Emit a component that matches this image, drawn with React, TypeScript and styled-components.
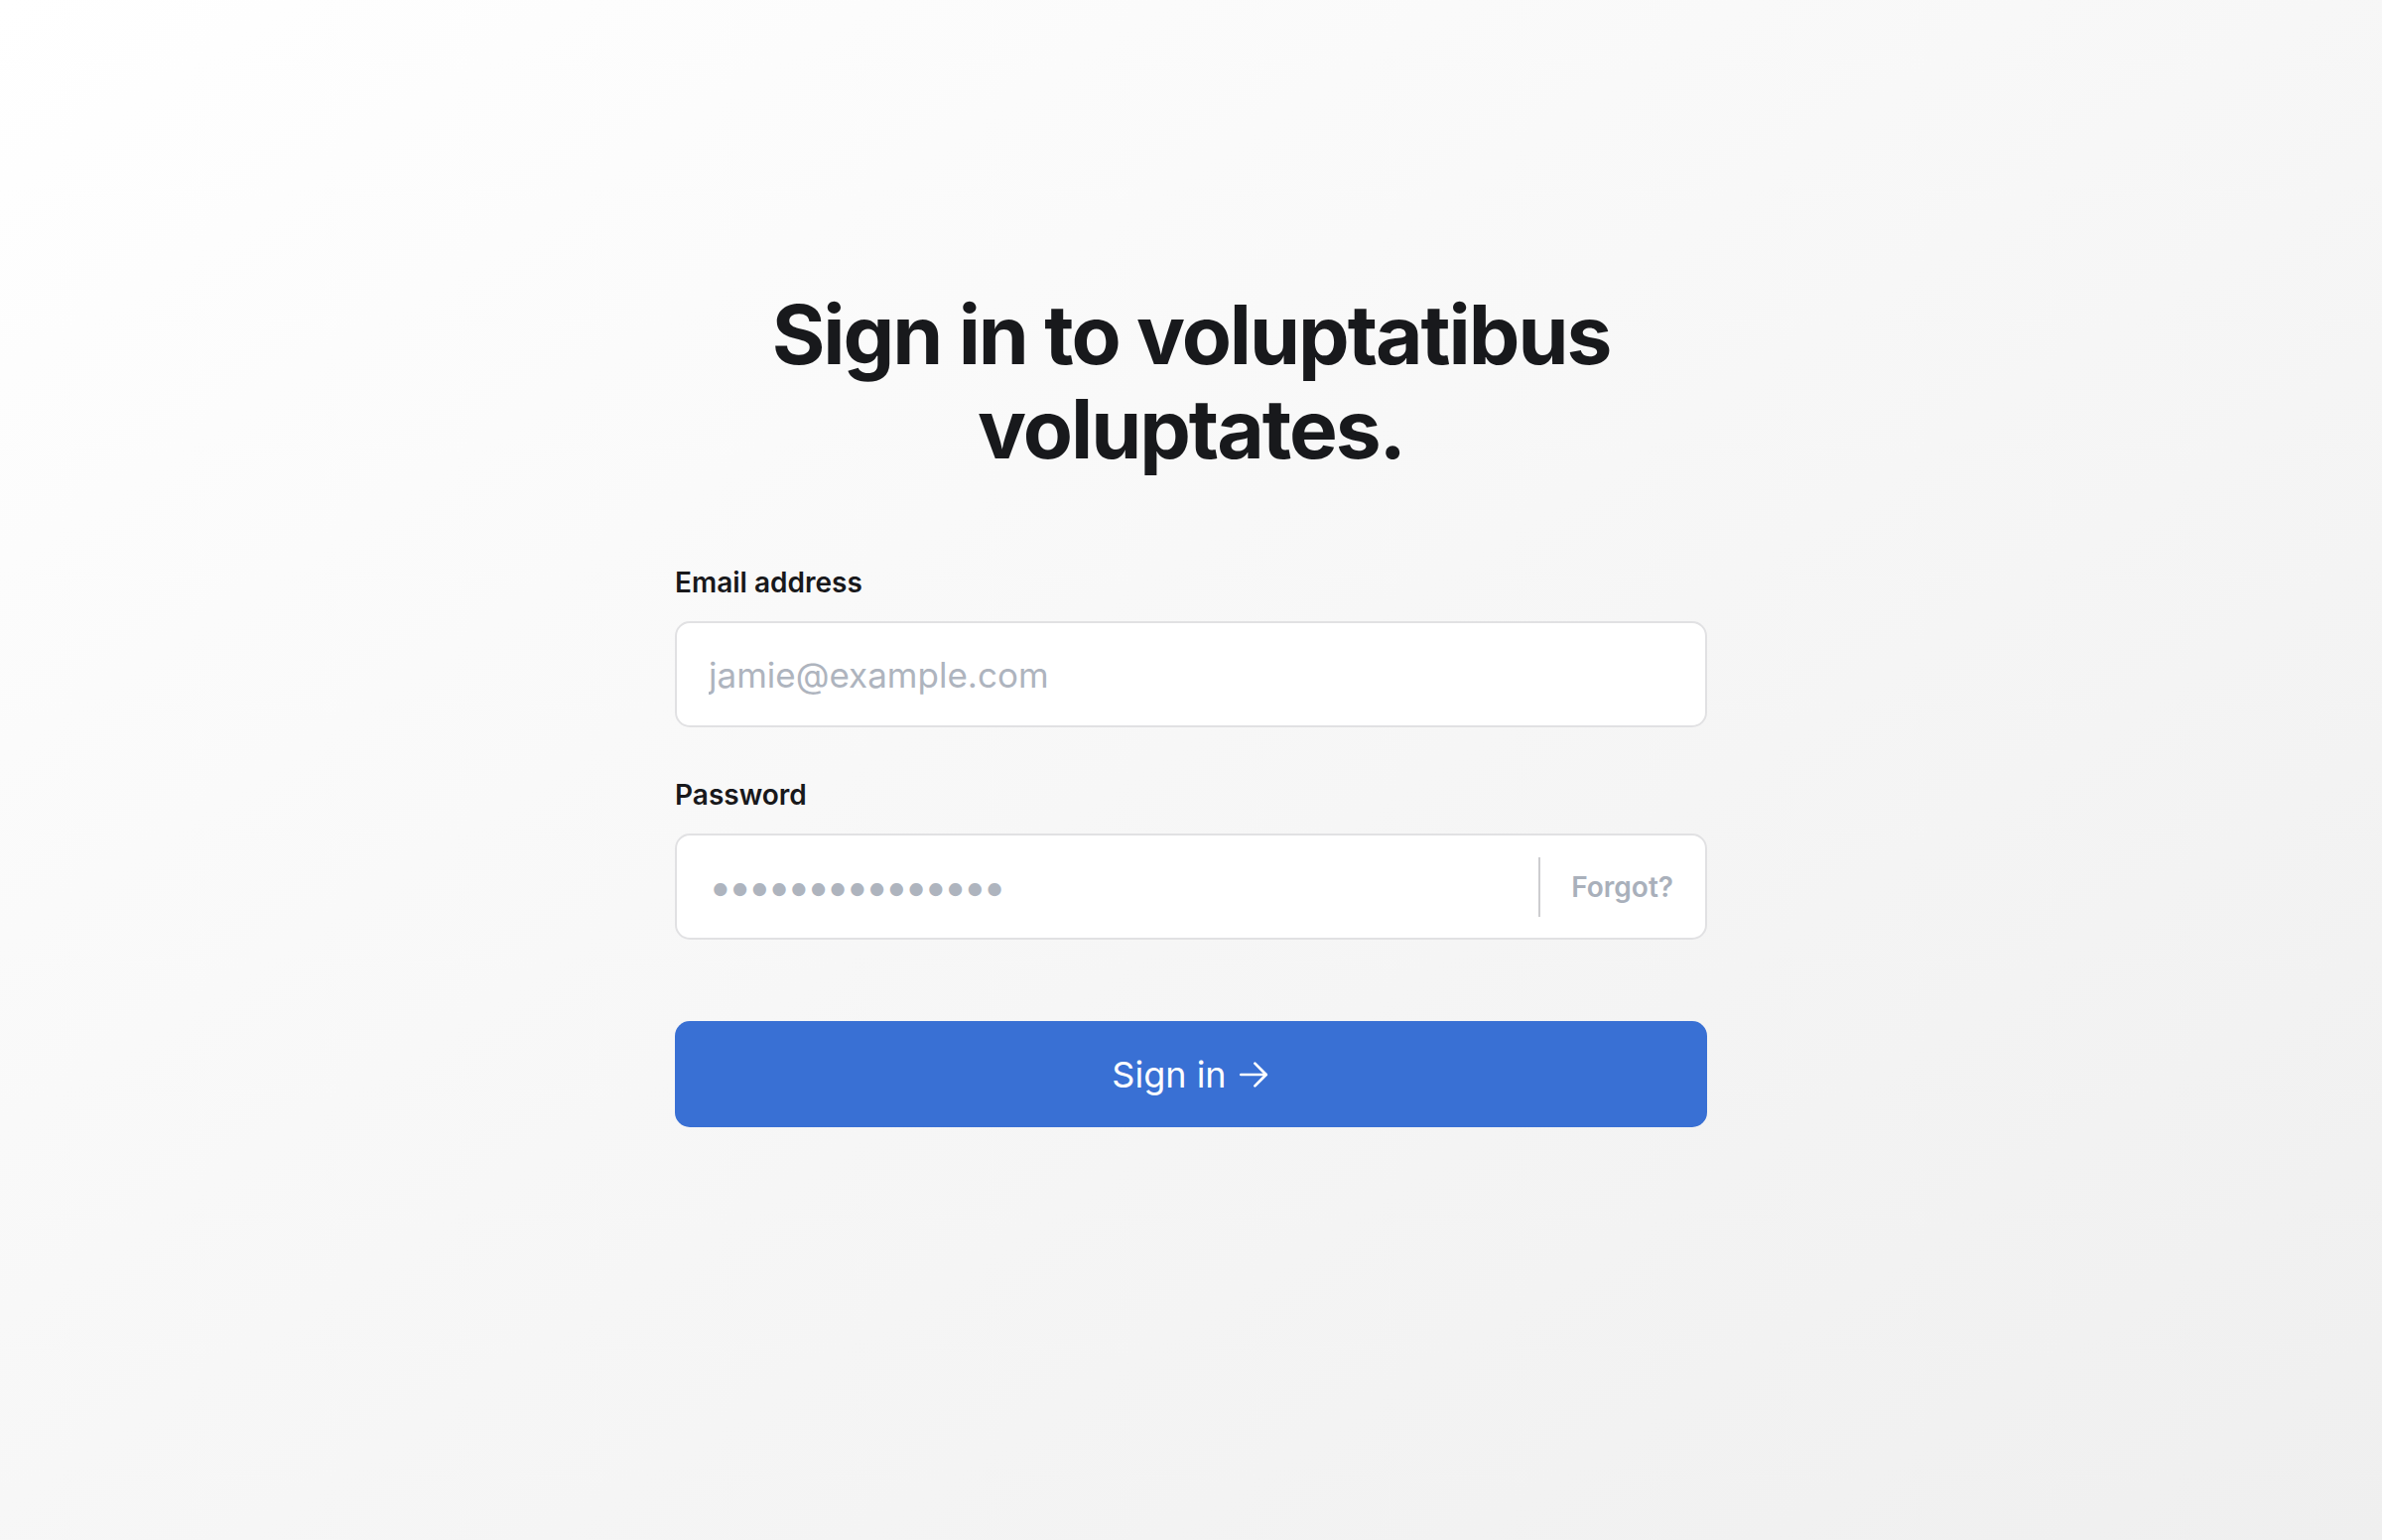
import React from "react";
import styled, { createGlobalStyle } from "styled-components";

const GlobalStyle = createGlobalStyle`
  html, body {
    margin: 0;
    padding: 0;
  }
  body {
    font-family: Inter, "Noto Sans", "Liberation Sans", sans-serif;
    color: #18181b;
    -webkit-font-smoothing: antialiased;
  }
  * { box-sizing: border-box; }
`;

const Page = styled.main`
  min-height: 1552px;
  width: 100%;
  background: linear-gradient(to bottom right, #ffffff 0%, #f6f6f6 55%, #efefef 100%);
  display: flex;
  justify-content: center;
  padding-top: 290px;
`;

const Panel = styled.div`
  width: 1040px;
  display: flex;
  flex-direction: column;
`;

const Title = styled.h1`
  margin: 0 0 88px;
  font-family: Inter, "Liberation Sans", sans-serif;
  font-weight: 700;
  font-size: 82px;
  line-height: 95px;
  letter-spacing: -0.025em;
  text-align: center;
  color: #18191c;
`;

const Form = styled.form`
  display: flex;
  flex-direction: column;
`;

const Field = styled.div<{ $gap?: number }>`
  display: flex;
  flex-direction: column;
  gap: 20px;
  margin-bottom: ${(p) => p.$gap ?? 0}px;
`;

const Label = styled.label`
  font-size: 28px;
  line-height: 38px;
  font-weight: 600;
  color: #18181b;
`;

const Box = styled.div`
  height: 107px;
  display: flex;
  align-items: center;
  background: #ffffff;
  border: 2px solid #e1e1e3;
  border-radius: 15px;
  overflow: hidden;
`;

const TextInput = styled.input<{ $dots?: boolean }>`
  flex: 1;
  min-width: 0;
  height: 100%;
  border: none;
  outline: none;
  background: transparent;
  padding: 0 32px;
  font-family: Inter, "Liberation Sans", sans-serif;
  font-size: ${(p) => (p.$dots ? "42px" : "35px")};
  color: #18181b;
  letter-spacing: ${(p) => (p.$dots ? "-3.9px" : "0")};
  &::placeholder {
    color: #aeb4be;
    opacity: 1;
  }
`;

const Divider = styled.span`
  width: 2px;
  height: 60px;
  background: #cdcdd0;
  flex-shrink: 0;
`;

const ForgotLink = styled.a`
  padding: 0 32px 0 31px;
  font-size: 28px;
  font-weight: 600;
  color: #a9b0bb;
  text-decoration: none;
  white-space: nowrap;
`;

const SubmitButton = styled.button`
  margin-top: 82px;
  height: 107px;
  border: none;
  border-radius: 15px;
  background: #3970d4;
  color: #ffffff;
  font-family: Inter, "Liberation Sans", sans-serif;
  font-size: 36px;
  font-weight: 400;
  display: flex;
  align-items: center;
  justify-content: center;
  gap: 10px;
  cursor: pointer;
`;

const Arrow = () => (
  <svg width="34" height="34" viewBox="0 0 24 24" fill="none" stroke="currentColor" strokeWidth="1.9" strokeLinecap="round" strokeLinejoin="round">
    <path d="M3 12h18" />
    <path d="M13 4l8 8-8 8" />
  </svg>
);

export default function App() {
  return (
    <>
      <GlobalStyle />
      <Page>
        <Panel>
          <Title>
            Sign in to voluptatibus
            <br />
            voluptates.
          </Title>
          <Form onSubmit={(e) => e.preventDefault()}>
            <Field $gap={49}>
              <Label htmlFor="email">Email address</Label>
              <Box>
                <TextInput id="email" type="email" placeholder="jamie@example.com" />
              </Box>
            </Field>
            <Field>
              <Label htmlFor="password">Password</Label>
              <Box>
                <TextInput id="password" type="password" $dots placeholder="•••••••••••••••" />
                <Divider />
                <ForgotLink href="#">Forgot?</ForgotLink>
              </Box>
            </Field>
            <SubmitButton type="submit">
              Sign in <Arrow />
            </SubmitButton>
          </Form>
        </Panel>
      </Page>
    </>
  );
}
